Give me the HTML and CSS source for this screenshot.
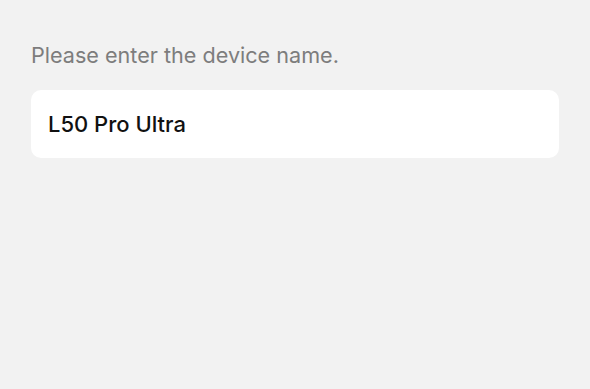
FILE: index.html
```html
<!DOCTYPE html>
<html lang="en">
<head>
<meta charset="utf-8">
<link rel="stylesheet" href="styles.css">
</head>
<body>
<main class="page">
  <p class="label">Please enter the device name.</p>
  <div class="field">
    <span class="value">L50 Pro Ultra</span>
  </div>
</main>
</body>
</html>
```
FILE: styles.css
```css
html, body {
  margin: 0;
  padding: 0;
  background: #f2f2f2;
  width: 590px;
  height: 389px;
  overflow: hidden;
}
.page {
  padding: 40px 31px 0 31px;
  font-family: Inter, "Liberation Sans", Arial, sans-serif;
}
.label {
  margin: 0;
  font-size: 21.6px;
  line-height: 30px;
  color: #7d7d7d;
}
.field {
  margin-top: 20px;
  width: 528px;
  height: 68px;
  box-sizing: border-box;
  background: #ffffff;
  border-radius: 10px;
  display: flex;
  align-items: center;
  padding: 0 17px;
}
.value {
  font-size: 22px;
  font-weight: 500;
  color: #111111;
}
```
